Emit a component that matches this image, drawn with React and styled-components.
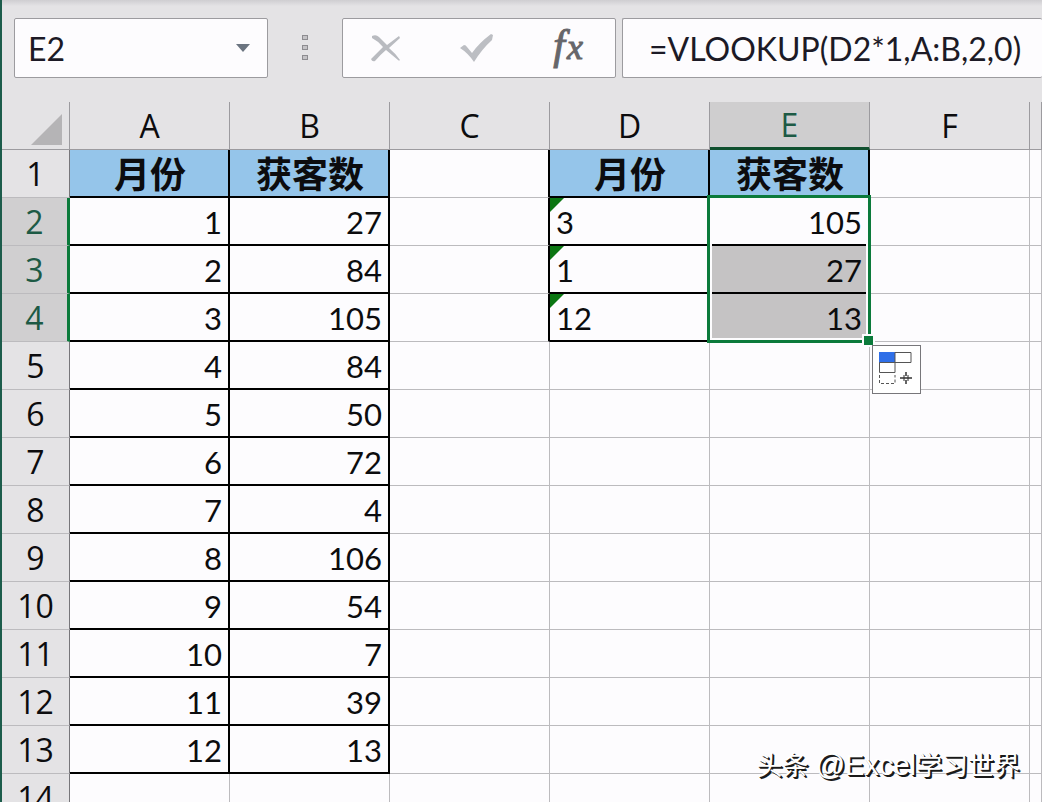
import React, { useState } from "react";
import styled, { createGlobalStyle, css } from "styled-components";

const Colors = {
  chrome: "#e4e3e5",
  sheet: "#fdfcfe",
  line: "#bcbbbe",
  edge: "#9c9b9f",
  headFill: "#95c5ea",
  selected: "#c5c3c4",
  green: "#0b7a3b",
  darkGreen: "#1d5a45",
};

const columns = ["A", "B", "C", "D", "E", "F", ""];

const months = [
  ["1", "27"],
  ["2", "84"],
  ["3", "105"],
  ["4", "84"],
  ["5", "50"],
  ["6", "72"],
  ["7", "4"],
  ["8", "106"],
  ["9", "54"],
  ["10", "7"],
  ["11", "39"],
  ["12", "13"],
];

const lookups = [
  ["3", "105"],
  ["1", "27"],
  ["12", "13"],
];

const rowNumbers = Array.from({ length: 14 }, (_, i) => i + 1);

const isActiveRow = row => row >= 2 && row <= 4;

const FillOptions = () => (
  <FillButton type="button" aria-label="Auto fill options">
    <svg width="37" height="36" viewBox="0 0 37 36" fill="none">
      <rect x="1" y="0" width="16" height="11" fill="#2f6fe8" />
      <path d="M17 .5h16v10H17z" stroke="#555" />
      <path d="M1.500 10.500h15.500v10H1.500z" stroke="#555" />
      <path
        d="M1.500 23v8.500h15.500v-8.500"
        stroke="#555"
        strokeDasharray="3 2"
      />
      <path
        d="M28 20v4M28 28v4M22 26h12"
        stroke="#333"
        strokeWidth="1.5"
      />
      <path d="M26 23v6M30 23v6" stroke="#333" />
    </svg>
  </FillButton>
);

const FormulaBar = () => {
  const [name, setName] = useState("E2");
  const [formula, setFormula] = useState("=VLOOKUP(D2*1,A:B,2,0)");

  return (
    <Toolbar>
      <NameBox>
        <BarInput
          aria-label="Name box"
          value={name}
          onChange={e => setName(e.target.value)}
        />
        <IconButton type="button" aria-label="Show names">
          <svg width="14" height="8" viewBox="0 0 14 8">
            <path d="M0 0h14L7 8z" fill="#6b7480" />
          </svg>
        </IconButton>
      </NameBox>

      <Grip>
        <i />
        <i />
        <i />
      </Grip>

      <Actions>
        <IconButton type="button" aria-label="Cancel">
          <svg width="30" height="28" viewBox="0 0 30 28">
            <path
              d="M1 2Q5 0 8 3L16 11L28 2L29 4L18 14Q24 19 29 26Q28 27 27 26L15 16Q9 21 4 27Q1 28 0 25L12 13Q7 7 1 4z"
              fill="#b9bbc0"
            />
          </svg>
        </IconButton>
        <IconButton type="button" aria-label="Enter">
          <svg width="34" height="28" viewBox="0 0 34 28">
            <path
              d="M0 14L4 11Q6 11 7 13L12 19Q19 9 31 0L33 1L32 6Q22 15 14 28Q8 19 0 14z"
              fill="#bcbec3"
            />
          </svg>
        </IconButton>
        <FunctionButton type="button" aria-label="Insert function">
          f<small>x</small>
        </FunctionButton>
      </Actions>

      <FormulaBox>
        <BarInput
          aria-label="Formula"
          value={formula}
          onChange={e => setFormula(e.target.value)}
        />
      </FormulaBox>
    </Toolbar>
  );
};

const Row = ({ row }) => {
  const title = row === 1;
  const month = months[row - 2] || [];
  const lookup = lookups[row - 2] || [];
  const inMonths = row <= 13;
  const inLookups = row <= 4;

  return (
    <tr>
      <RowHead scope="row" $active={isActiveRow(row)}>
        {row}
      </RowHead>
      <Cell $title={title} $boxed={inMonths}>
        {title ? "月份" : month[0]}
      </Cell>
      <Cell $title={title} $boxed={inMonths}>
        {title ? "获客数" : month[1]}
      </Cell>
      <Cell $edge={inLookups} />
      <Cell $title={title} $boxed={inLookups} $text={!title}>
        {lookup[0] && <TextFlag />}
        {title ? "月份" : lookup[0]}
      </Cell>
      <Cell
        $title={title}
        $boxed={inLookups}
        $selected={row === 3 || row === 4}
      >
        {title ? "获客数" : lookup[1]}
        {row === 2 && (
          <Selection>
            <FillHandle />
            <FillOptions />
          </Selection>
        )}
      </Cell>
      <Cell />
      <Cell />
    </tr>
  );
};

const App = () => (
  <Window>
    <GlobalStyle />
    <FormulaBar />
    <Sheet>
      <colgroup>
        <HeadCol />
        {columns.map((name, i) => (name ? <DataCol key={i} /> : <col key={i} />))}
      </colgroup>
      <thead>
        <tr>
          <Corner>
            <svg width="31" height="31" viewBox="0 0 31 31">
              <path d="M31 0v31H0z" fill="#b5b4b6" />
            </svg>
          </Corner>
          {columns.map((name, i) => (
            <ColumnHead key={i} scope="col" $active={name === "E"}>
              {name}
            </ColumnHead>
          ))}
        </tr>
      </thead>
      <tbody>
        {rowNumbers.map(row => (
          <Row key={row} row={row} />
        ))}
      </tbody>
    </Sheet>
    <Watermark>
      头条 <span>@Excel</span>学习世界
    </Watermark>
  </Window>
);

const GlobalStyle = createGlobalStyle`
  * {
    box-sizing: border-box;
  }

  body {
    margin: 0;
    background: ${Colors.sheet};
  }
`;

const Window = styled.main`
  position: relative;
  height: 100vh;
  overflow: hidden;
  border-left: 2px solid #1c5c4b;
  background: ${Colors.sheet};
  font-family: Lato, "Noto Sans CJK SC", sans-serif;
  color: #0c0c0e;
`;

const Toolbar = styled.div`
  display: flex;
  height: 102px;
  padding: 18px 0 24px 12px;
  background: linear-gradient(#cfced1, ${Colors.chrome} 6px);
`;

const Box = styled.div`
  display: flex;
  flex-shrink: 0;
  align-items: center;
  border: 1px solid ${Colors.edge};
  border-radius: 2px;
  background: ${Colors.sheet};
`;

const NameBox = styled(Box)`
  width: 254px;
  padding: 0 17px 0 13px;
`;

const Actions = styled(Box)`
  width: 274px;
  padding: 0 32px 0 28px;
  justify-content: space-between;
`;

const FormulaBox = styled(Box)`
  flex: 1;
  min-width: 0;
  margin-left: 6px;
  padding-left: 26px;
  border-right: 0;
`;

const BarInput = styled.input`
  flex: 1;
  min-width: 0;
  padding: 0;
  border: 0;
  outline: 0;
  background: transparent;
  font-family: Lato, sans-serif;
  font-size: 32px;
  color: #1c1a26;
`;

const Grip = styled.div`
  display: flex;
  flex-direction: column;
  flex-shrink: 0;
  align-items: center;
  justify-content: center;
  gap: 5px;
  width: 74px;
  padding-bottom: 2px;

  i {
    width: 6px;
    height: 5px;
    border: 1px solid #8d8c90;
    background: #c4c3c6;
  }
`;

const IconButton = styled.button`
  display: flex;
  padding: 0;
  border: 0;
  background: none;
`;

const FunctionButton = styled(IconButton)`
  align-items: baseline;
  gap: 2px;
  padding-bottom: 4px;
  font-family: "Liberation Serif", serif;
  font-size: 42px;
  font-style: italic;
  font-weight: 400;
  line-height: 48px;
  color: #66666a;
  -webkit-text-stroke: 1px #66666a;

  small {
    font-size: 36px;
  }
`;

const Sheet = styled.table`
  width: 100%;
  table-layout: fixed;
  border-collapse: separate;
  border-spacing: 0;

  tr {
    height: 48px;
  }
`;

const HeadCol = styled.col`
  width: 68px;
`;

const DataCol = styled.col`
  width: 160px;
`;

const headStyle = css`
  padding: 0;
  background: ${Colors.chrome};
  font-family: "Open Sans", sans-serif;
  font-size: 32px;
  font-weight: 400;
  line-height: 44px;
  text-align: center;
`;

const Corner = styled.td`
  ${headStyle}
  padding: 8px 7px 0 0;
  border-right: 1px solid ${Colors.edge};
  border-bottom: 1px solid ${Colors.edge};
  line-height: 0;
  text-align: right;
`;

const ColumnHead = styled.th`
  ${headStyle}
  border-right: 1px solid ${Colors.edge};
  border-bottom: 1px solid ${Colors.edge};

  ${({ $active }) =>
    $active &&
    css`
      padding-top: 1px;
      border-bottom: 3px solid #10502f;
      background: #cfcecf;
      color: ${Colors.darkGreen};
    `}
`;

const RowHead = styled.th`
  ${headStyle}
  border-right: 1px solid #77767a;
  border-bottom: 1px solid ${Colors.line};

  ${({ $active }) =>
    $active &&
    css`
      border-right: 3px solid ${Colors.green};
      background: #d0cfd0;
      color: ${Colors.darkGreen};
    `}
`;

const Cell = styled.td`
  position: relative;
  padding: 2px 6px 0;
  border-right: 1px solid ${Colors.line};
  border-bottom: 1px solid ${Colors.line};
  background: ${Colors.sheet};
  font-size: 31px;
  line-height: 44px;
  text-align: ${({ $text }) => ($text ? "left" : "right")};

  ${({ $edge }) => $edge && "border-right: 2px solid #000;"}

  ${({ $boxed }) =>
    $boxed &&
    css`
      border-right: 2px solid #000;
      border-bottom: 2px solid #000;
    `}

  ${({ $selected }) => $selected && `background: ${Colors.selected};`}

  ${({ $title }) =>
    $title &&
    css`
      padding: 0 0 2px 2px;
      background: ${Colors.headFill};
      font-family: "Noto Sans CJK SC", sans-serif;
      font-size: 36px;
      font-weight: 700;
      text-align: center;
    `}
`;

// marks numbers stored as text
const TextFlag = styled.i`
  position: absolute;
  top: 0;
  left: 0;
  border-top: 14px solid #0b7612;
  border-right: 14px solid transparent;
`;

const Selection = styled.div`
  position: absolute;
  z-index: 1;
  top: -3px;
  left: -3px;
  width: 164px;
  height: 148px;
  border: 3px solid ${Colors.green};
  box-shadow: inset 0 0 0 2px ${Colors.sheet};
`;

const FillHandle = styled.i`
  position: absolute;
  right: -7px;
  bottom: -7px;
  width: 13px;
  height: 13px;
  border: 2px solid ${Colors.sheet};
  background: ${Colors.green};
`;

const FillButton = styled.button`
  position: absolute;
  top: 147px;
  left: 162px;
  display: flex;
  align-items: center;
  justify-content: center;
  width: 49px;
  height: 49px;
  padding: 0;
  border: 1px solid #77767a;
  background: #fff;
`;

const Watermark = styled.div`
  position: absolute;
  right: 22px;
  bottom: 16px;
  z-index: 2;
  font-family: "Liberation Sans", "Noto Sans CJK SC", sans-serif;
  font-size: 26px;
  line-height: 40px;
  color: #fff;
  text-shadow: 1px 1px 0 #1a1a1a, 2px 2px 0 #1a1a1a;

  span {
    font-size: 29px;
  }
`;

export default App;
